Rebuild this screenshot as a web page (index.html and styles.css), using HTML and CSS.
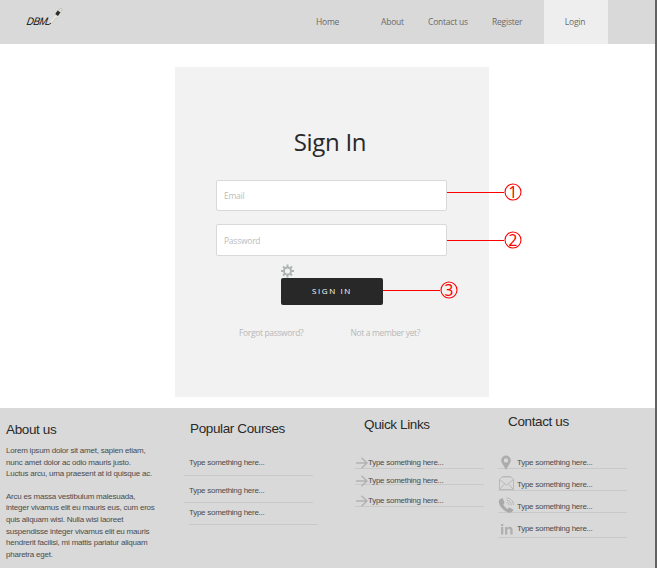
FILE: index.html
```html
<!DOCTYPE html>
<html lang="en">
<head>
<meta charset="utf-8">
<title>Sign In</title>
<link rel="stylesheet" href="styles.css">
</head>
<body>
<div class="page">
  <header class="header">
    <div class="logo">
      <span class="logo-text">DBM</span>
      <svg class="logo-pen" width="18" height="20" viewBox="0 0 18 20" fill="none">
        <path d="M0 16.500h3l2-1.500" stroke="#333"/>
        <path d="M5 14.500 10.500 8" stroke="#f3f2e6" stroke-width="1.600"/>
        <path d="M5.500 15.500 10.500 9" stroke="#a9a795" stroke-width=".5"/>
        <ellipse cx="14.300" cy="2.400" rx="1.400" ry="2.200" transform="rotate(35 14.300 2.400)" stroke="#b5b5aa" fill="#e8e8e0" stroke-width=".8"/>
        <path d="M10.600 6.900 13 3.600" stroke="#292b28" stroke-width="3.400"/>
      </svg>
    </div>
    <nav class="nav">
      <a class="home">Home</a>
      <a class="about">About</a>
      <a class="contact">Contact us</a>
      <a class="register">Register</a>
      <a class="login">Login</a>
    </nav>
  </header>

  <main class="main">
    <form class="card">
      <h1>Sign In</h1>
      <div class="field email"><span>Email</span>
        <div class="callout"><i></i><b><svg width="18" height="18" viewBox="0 0 18 18"><circle cx="9" cy="9" r="8"/></svg><em>1</em></b></div>
      </div>
      <div class="field password"><span>Password</span>
        <div class="callout"><i></i><b><svg width="18" height="18" viewBox="0 0 18 18"><circle cx="9" cy="9" r="8"/></svg><em>2</em></b></div>
      </div>
      <div class="submit">
        <svg class="gear" width="14" height="14" viewBox="0 0 14 14" fill="none" stroke="#adb5b4">
          <circle cx="6.500" cy="7" r="3.500" stroke-width="1.900"/>
          <path d="M6.500.5v3M6.500 10.500v3M0 7h3M10 7h3M2 2.500l2 2M9 9.500l2 2M11 2.500l-2 2M4 9.500l-2 2" stroke-width="1.900"/>
        </svg>
        <div class="button"><span>SIGN IN</span>
          <div class="callout"><i></i><b><svg width="18" height="18" viewBox="0 0 18 18"><circle cx="9" cy="9" r="8"/></svg><em>3</em></b></div>
        </div>
      </div>
      <div class="links"><a>Forgot password?</a><a>Not a member yet?</a></div>
    </form>
  </main>

  <footer class="footer">
    <section class="col-about">
      <h2>About us</h2>
      <p>Lorem ipsum dolor sit amet, sapien etiam,<br>nunc amet dolor ac odio mauris justo.<br>Luctus arcu, urna praesent at id quisque ac.</p>
      <p>Arcu es massa vestibulum malesuada,<br>integer vivamus elit eu mauris eus, cum eros<br>quis aliquam wisi. Nulla wisi laoreet<br>suspendisse integer vivamus elit eu mauris<br>hendrerit facilisi, mi mattis pariatur aliquam<br>pharetra eget.</p>
    </section>
    <section class="col-courses">
      <h2>Popular Courses</h2>
      <ul>
        <li><span>Type something here...</span></li>
        <li><span>Type something here...</span></li>
        <li><span>Type something here...</span></li>
      </ul>
    </section>
    <section class="col-quick">
      <h2>Quick Links</h2>
      <ul>
        <li><svg width="13" height="12" viewBox="0 0 13 12"><path d="M1 6h11M6.500.8 12 6 6.500 11.200"/></svg><span>Type something here...</span></li>
        <li><svg width="13" height="12" viewBox="0 0 13 12"><path d="M1 6h11M6.500.8 12 6 6.500 11.200"/></svg><span>Type something here...</span></li>
        <li><svg width="13" height="12" viewBox="0 0 13 12"><path d="M1 6h11M6.500.8 12 6 6.500 11.200"/></svg><span>Type something here...</span></li>
      </ul>
    </section>
    <section class="col-contact">
      <h2>Contact us</h2>
      <ul>
        <li><svg width="18" height="16" viewBox="0 0 18 16"><path fill="#acacac" fill-rule="evenodd" d="M8 .5a4.800 4.800 0 0 0-4.800 4.800C3.200 8.500 6 10.500 8 15c2-4.500 4.800-6.500 4.800-9.700A4.800 4.800 0 0 0 8 .5Zm0 2.700a2.200 2.200 0 1 1 0 4.400 2.200 2.200 0 0 1 0-4.400Z"/></svg><span>Type something here...</span></li>
        <li><svg width="18" height="16" viewBox="0 0 18 16" fill="none" stroke="#b9b9b9"><path d="M1.500 4.500v10h14v-10l-3-3h-8zM1.500 4.500 8.500 10l7-5.500M1.500 14.500 6.500 9M15.500 14.500l-5-5.500M4 2h9"/></svg><span>Type something here...</span></li>
        <li><svg width="18" height="16" viewBox="0 0 18 16"><path fill="#a9a9a9" d="M3.700 1.300 1.600 2.500C.2 4 .8 7 3 10c2.400 3.300 5.800 5.500 8.500 5.800 1.700.1 3-1.100 3.600-2.300.2-.5 0-.9-.4-1.200l-2.900-1.600c-.5-.3-.9-.1-1.200.2l-1 1c-1.800-.7-3.700-2.900-4.300-4.700l1-1.100c.3-.4.3-.7.1-1.200L4.900 1.700c-.3-.6-.8-.6-1.200-.4Z"/><path fill="none" stroke="#b5b5b5" d="M8.500 5.500c1.500 0 2.500 1 2.700 2.700M8.500 3.200c2.700 0 4.700 2.200 4.900 5M8.500 1c4 0 6.900 3.100 7 7"/></svg><span>Type something here...</span></li>
        <li><svg width="18" height="16" viewBox="0 0 18 16" fill="#b0b0b0"><path d="M3 6h2.300v7.500H3zM3 3h2.300v2H3zM7 6h2.200v1C9.700 6.200 10.500 5.800 11.600 5.800c2 0 3 1.200 3 3.300v4.400h-2.300V9.600c0-1.200-.5-1.900-1.400-1.900-1 0-1.600.7-1.600 1.900v3.900H7z"/></svg><span>Type something here...</span></li>
      </ul>
    </section>
  </footer>
</div>
</body>
</html>
```
FILE: styles.css
```css
* { box-sizing: border-box; }
body { margin: 0; background: #fff; font: 8px/12px "Open Sans", sans-serif; }
.page { width: 657px; height: 568px; overflow: hidden; border-right: 2px solid #606266; display: flex; flex-direction: column; }

.header { height: 44px; flex: none; background: #d9d9d9; display: flex; justify-content: space-between; }
.logo { display: flex; padding: 8px 0 0 23px; }
.logo-text { font: italic 11px/14px "Liberation Sans", sans-serif; color: #111; transform: skewX(-10deg) scaleX(.88); transform-origin: 0 100%; width: 23px; padding-top: 6px; letter-spacing: -.5px; }
.nav { display: flex; width: 355px; font-size: 8.5px; letter-spacing: -.22px; line-height: 43px; color: #6a6a6a; padding-left: 16px; }
.home { width: 65px; }
.about { width: 47px; }
.contact { width: 64px; }
.register { width: 52px; }
.login { width: 64px; background: #eee; text-align: center; padding-right: 2px; }

.main { height: 364px; flex: none; padding: 23px 0 0 175px; }
.card { width: 314px; height: 330px; background: #f2f2f2; padding: 58px 42px 0 41px; }
h1 { margin: 0 0 20px; padding-right: 3px; font-size: 24px; font-weight: 400; line-height: 33px; padding-bottom: 2px; letter-spacing: -.3px; text-align: center; color: #292929; }
.field { position: relative; height: 31px; border: 1px solid #d9d9d9; border-radius: 2px; background: #fff; padding-left: 7px; font-size: 8.5px; letter-spacing: -.25px; line-height: 30px; color: #bcbcbc; }
.password { margin-top: 13px; height: 32px; line-height: 31px; }
.submit { width: 102px; margin: 8px 0 0 65px; display: flex; flex-direction: column; }
.button { position: relative; height: 27px; border-radius: 2px; background: #282828; color: #fff; text-align: center; line-height: 26px; letter-spacing: 1.6px; }
.links { display: flex; gap: 47px; margin: 22px 0 0 23px; font-size: 8.5px; letter-spacing: -.35px; color: #b8b8b8; white-space: nowrap; }

.callout { position: absolute; left: 100%; top: 2px; display: flex; align-items: center; color: #f00; letter-spacing: 0; }
.field .callout { left: calc(100% + 1px); }
.callout i { width: 57px; height: 1px; background: #f00; }
.callout b { position: relative; width: 18px; height: 18px; font-weight: 400; }
.callout svg { display: block; fill: none; stroke: #f00; stroke-width: 1.1; }
.callout em { position: absolute; inset: 0; font: 15.5px/18px "Noto Sans", sans-serif; text-align: center; }
.password .callout { top: 6px; }
.button .callout { top: 3px; }

.footer { flex: 1; background: #d9d9d9; display: flex; font: 8px/12px "Liberation Sans", sans-serif; letter-spacing: -.27px; color: #4c4c4c; }
.footer h2 { margin: 0; font-size: 13.5px; line-height: 15px; padding-bottom: 1px; font-weight: 400; color: #292929; letter-spacing: -.37px; }
.footer p { margin: 0 0 11px; line-height: 11.6px; letter-spacing: -.22px; white-space: nowrap; }
.footer ul { list-style: none; margin: 0; padding: 0; }
.footer li { display: flex; border-bottom: 1px solid #c9c9c9; white-space: nowrap; }
.col-about { width: 184px; padding: 14px 0 0 6px; }
.col-about h2 { margin-bottom: 7px; }
.col-courses { width: 171px; padding-top: 13px; }
.col-courses h2 { padding-left: 6px; margin-bottom: 20px; }
.col-courses li { width: 129px; padding-left: 5px; height: 19px; }
.col-courses li:nth-child(2) { height: 27px; padding-top: 9px; }
.col-courses li:nth-child(3) { height: 22px; margin-left: 5px; padding: 4px 0 0; }
.col-quick { width: 143px; padding-top: 9px; }
.col-quick h2 { padding-left: 9px; margin-bottom: 24px; }
.col-quick li { width: 129px; height: 12px; }
.col-quick li:nth-child(2) { height: 16px; padding-top: 6px; }
.col-quick li:nth-child(3) { height: 22px; padding-top: 10px; }
.col-quick svg { flex: none; fill: none; stroke: #b2b2b2; stroke-width: 1.4; }
.col-contact { width: 157px; padding-top: 6px; }
.col-contact h2 { padding-left: 10px; margin-bottom: 24px; }
.col-contact li { width: 129px; height: 22px; padding-top: 10px; }
.col-contact li:first-child { height: 15px; padding-top: 3px; }
.col-contact li:last-child { height: 25px; }
.col-contact svg { flex: none; margin: -2px 1px 0 0; }
.col-contact li:nth-child(2) svg, .col-contact li:nth-child(3) svg { margin-top: -4px; }
```
